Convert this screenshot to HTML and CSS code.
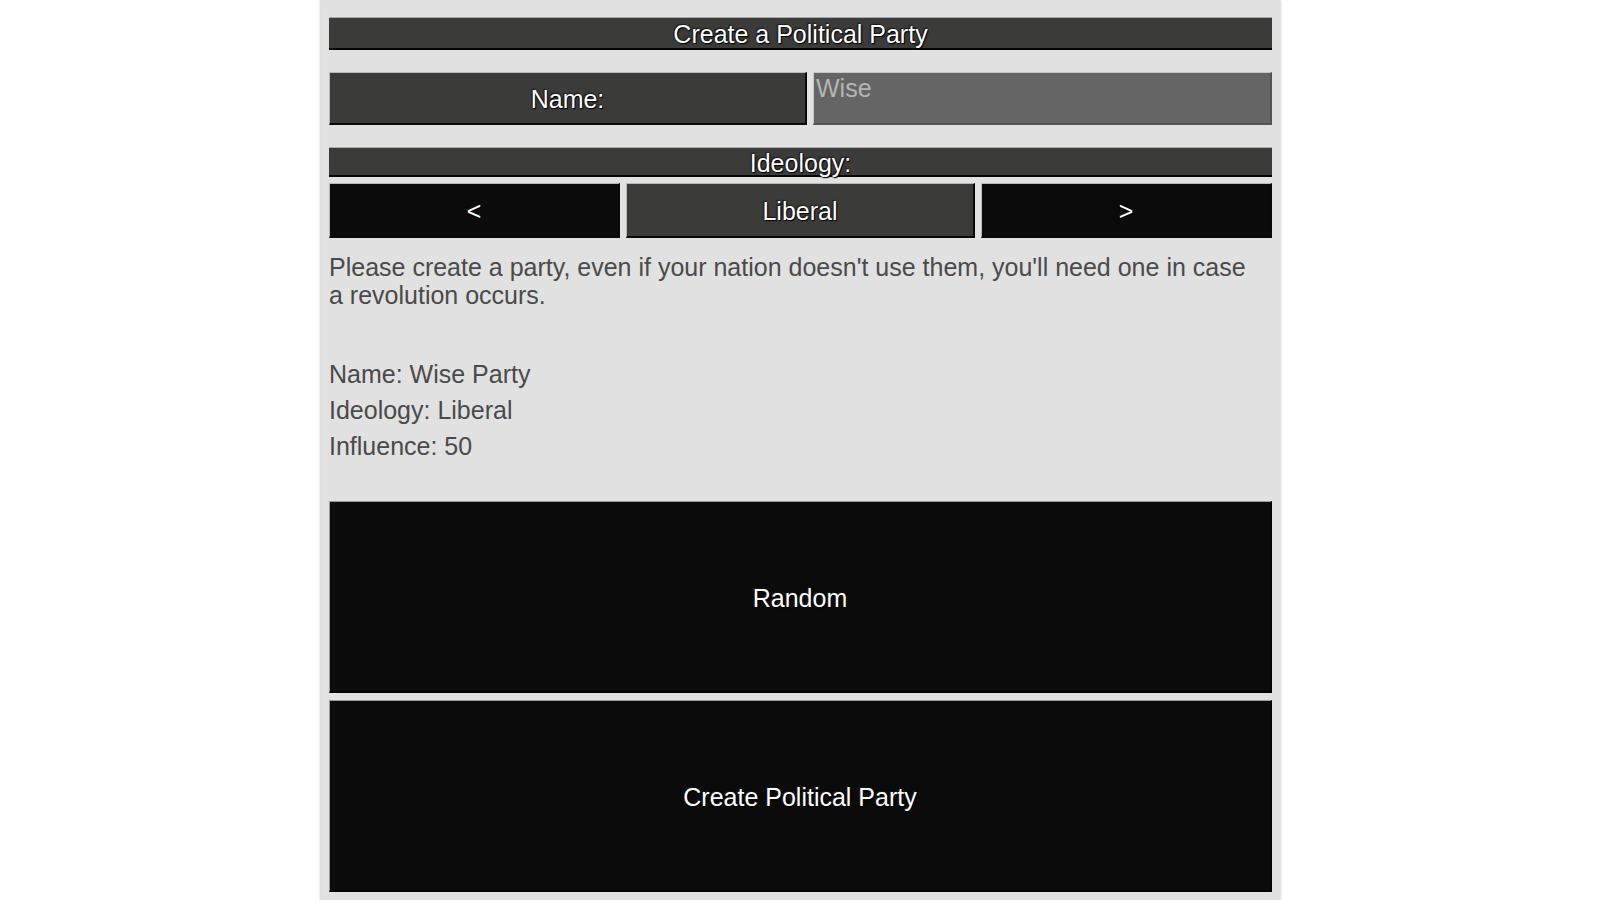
FILE: index.html
```html
<!DOCTYPE html>
<html lang="en">
<head>
<meta charset="utf-8">
<title>Create a Political Party</title>
<link rel="stylesheet" href="styles.css">
</head>
<body>
<div class="panel">
  <div class="title bar">Create a Political Party</div>
  <div class="name-row">
    <div class="name-label box">Name:</div>
    <div class="name-input box">Wise</div>
  </div>
  <div class="ideo-head bar">Ideology:</div>
  <div class="ideo-row">
    <div class="btn box arrow">&lt;</div>
    <div class="btn box current">Liberal</div>
    <div class="btn box arrow">&gt;</div>
  </div>
  <p class="note">Please create a party, even if your nation doesn't use them, you'll need one in case a revolution occurs.</p>
  <div class="stats">
    <div>Name: Wise Party</div>
    <div>Ideology: Liberal</div>
    <div>Influence: 50</div>
  </div>
  <div class="big box">Random</div>
  <div class="big box create">Create Political Party</div>
</div>
</body>
</html>
```

FILE: styles.css
```css
html, body {
  margin: 0;
  padding: 0;
  background: #ffffff;
}
body {
  font-family: "Liberation Sans", Arial, sans-serif;
}
.panel {
  box-sizing: border-box;
  width: 959px;
  min-height: 900px;
  margin-left: 321px;
  background: #e1e1e1;
  padding: 17px 8px 0 8px;
  display: flex;
  flex-direction: column;
  box-shadow: -1px 0 2px #cfcfcf, 1px 0 2px #d8d8d8;
}
.box {
  box-sizing: border-box;
  border-style: solid;
  border-width: 1px 2px 2px 1px;
  border-color: #b9b9b9 #0a0a0a #0a0a0a #b9b9b9;
}
.bar {
  box-sizing: border-box;
  background: #3b3c3a;
  color: #ffffff;
  text-align: center;
  font-size: 25px;
  border-top: 1px solid #a9a9a9;
  border-bottom: 2px solid #050505;
  text-shadow: 0 0 2px #000, 1px 1px 1px #000, -1px -1px 1px #222;
}
.title {
  height: 33px;
  line-height: 33px;
}
.name-row {
  margin-top: 22px;
  height: 53px;
  display: flex;
  gap: 6px;
}
.name-label {
  width: 478px;
  background: #3b3c3a;
  color: #ffffff;
  font-size: 25px;
  padding-top: 3px;
  display: flex;
  align-items: center;
  justify-content: center;
  text-shadow: 0 0 2px #000, 1px 1px 1px #000, -1px -1px 1px #222;
}
.name-input {
  flex: 1;
  background: #656565;
  color: #b5b5b5;
  font-size: 25px;
  padding: 2px 0 0 2px;
  line-height: 26px;
  border-color: #c6c6c6 #555 #555 #c6c6c6;
}
.ideo-head {
  margin-top: 22px;
  height: 30px;
  line-height: 31px;
}
.ideo-row {
  margin-top: 6px;
  height: 55px;
  display: flex;
  gap: 6px;
}
.btn {
  display: flex;
  align-items: center;
  justify-content: center;
  color: #ffffff;
  font-size: 25px;
  padding-top: 3px;
  text-shadow: 0 0 2px #000, 1px 1px 1px #000, -1px -1px 1px #222;
}
.arrow {
  width: 291px;
  background: #0b0b0b;
}
.current {
  flex: 1;
  background: #3b3c3a;
}
.note {
  margin: 15px 0 0 0;
  padding-right: 20px;
  font-size: 25px;
  line-height: 28px;
  color: #4a4a4a;
}
.stats {
  margin-top: 47px;
  font-size: 25px;
  line-height: 36px;
  color: #4a4a4a;
}
.big {
  height: 192px;
  background: #0b0b0b;
  color: #ffffff;
  font-size: 25px;
  padding-top: 3px;
  display: flex;
  align-items: center;
  justify-content: center;
  text-shadow: 0 0 2px #000, 1px 1px 1px #000, -1px -1px 1px #222;
  margin-top: 37px;
  border-color: #9a9a9a #050505 #050505 #9a9a9a;
}
.create {
  margin-top: 7px;
}
```
